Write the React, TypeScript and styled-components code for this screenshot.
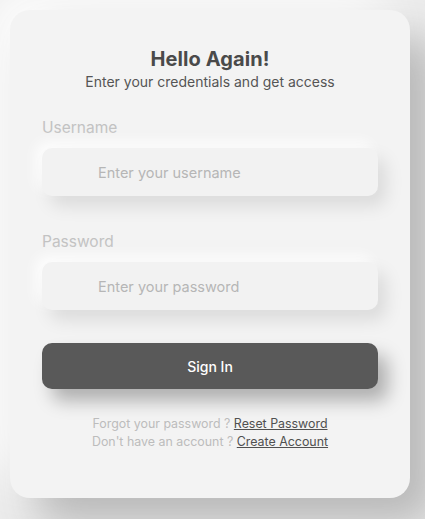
import React from 'react'
import styled, { createGlobalStyle } from 'styled-components'

const GlobalStyle = createGlobalStyle`
  body {
    margin: 0;
    background: #ececec;
    font-family: 'Inter', 'Open Sans', sans-serif;
    overflow: hidden;
  }
`

const Page = styled.div`
  padding: 10px;
  height: 519px;
  box-sizing: border-box;
`

const Card = styled.div`
  width: 400px;
  height: 488px;
  box-sizing: border-box;
  padding: 36px 32px 0;
  background: #f3f3f3;
  border-radius: 20px;
  box-shadow: 26px 26px 44px #b8b8b8, -20px -20px 50px #ffffff;
  display: flex;
  flex-flow: column nowrap;
`

const Title = styled.h1`
  margin: 0;
  text-align: center;
  font-size: 20px;
  font-weight: 700;
  color: #4a4a4a;
  line-height: 26px;
  letter-spacing: 0.1px;
`

const Subtitle = styled.p`
  margin: 0;
  text-align: center;
  font-size: 14px;
  color: #555;
  line-height: 20px;
`

const Field = styled.div`
  display: flex;
  flex-flow: column nowrap;
  margin-top: ${(p: { top: number }) => p.top}px;
`

const Label = styled.label`
  font-size: 15.5px;
  color: #c2c2c2;
  line-height: 20px;
  margin-bottom: 10px;
`

const Input = styled.input`
  height: 48px;
  box-sizing: border-box;
  border: none;
  outline: none;
  border-radius: 10px;
  background: #f2f2f2;
  padding-left: 56px;
  font-family: inherit;
  font-size: 14.5px;
  color: #555;
  box-shadow: 8px 10px 18px rgba(0, 0, 0, 0.1), -6px -6px 14px rgba(255, 255, 255, 0.9);
  &::placeholder {
    color: #b6b6b6;
  }
`

const Button = styled.button`
  margin-top: 33px;
  height: 46px;
  border: none;
  border-radius: 10px;
  background: #595959;
  color: #fff;
  font-family: inherit;
  font-size: 14px;
  font-weight: 500;
  box-shadow: 10px 12px 18px rgba(0, 0, 0, 0.28);
  cursor: pointer;
`

const Footer = styled.div`
  margin-top: 26px;
  text-align: center;
  font-size: 12.4px;
  line-height: 18px;
  color: #bcbcbc;
`

const Link = styled.a`
  color: #505050;
  text-decoration: underline;
`

export default function App() {
  return (
    <Page>
      <GlobalStyle />
      <Card>
        <Title>Hello Again!</Title>
        <Subtitle>Enter your credentials and get access</Subtitle>
        <Field top={26}>
          <Label>Username</Label>
          <Input placeholder="Enter your username" />
        </Field>
        <Field top={36}>
          <Label>Password</Label>
          <Input type="password" placeholder="Enter your password" />
        </Field>
        <Button>Sign In</Button>
        <Footer>
          <div>
            Forgot your password ? <Link href="#">Reset Password</Link>
          </div>
          <div>
            Don't have an account ? <Link href="#">Create Account</Link>
          </div>
        </Footer>
      </Card>
    </Page>
  )
}
